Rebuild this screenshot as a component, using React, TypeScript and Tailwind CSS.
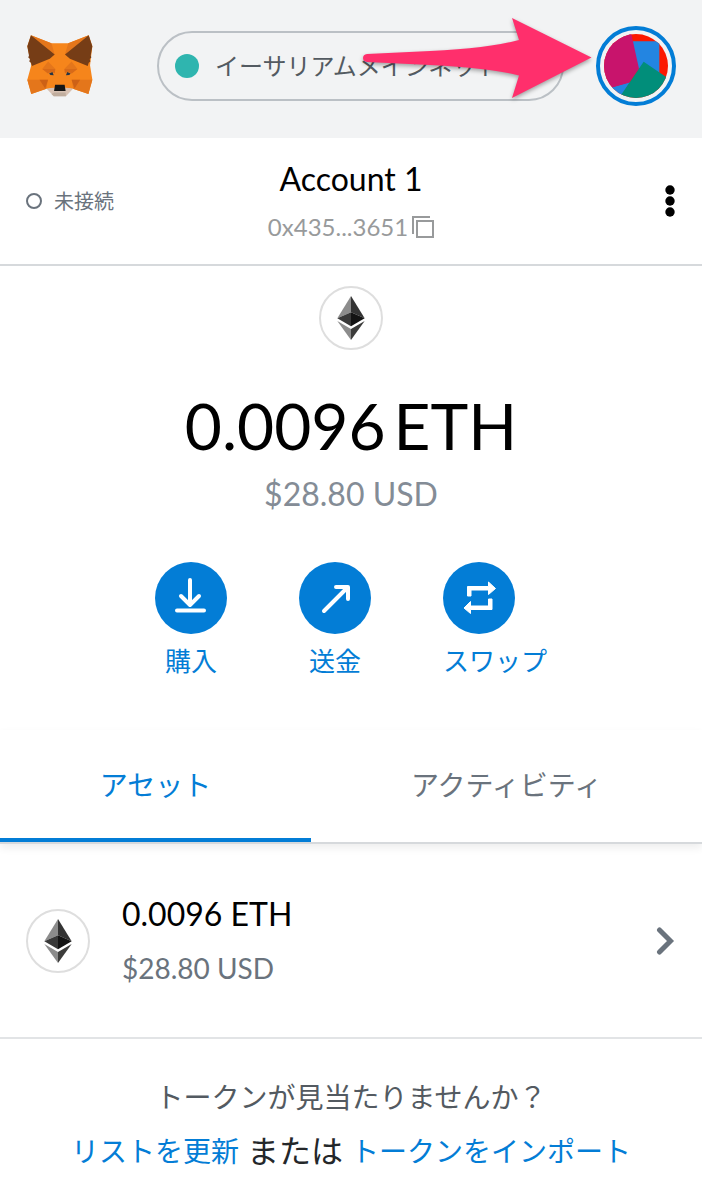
import React from "react";

const FONT = "font-['Lato','Noto_Sans_CJK_JP',sans-serif]";

function FoxLogo() {
  return (
    <svg viewBox="50 42 206 192" className="h-16 w-[68px]" role="img" aria-label="MetaMask">
      <polygon
        fill="#f6851b"
        points="65,45 127,69 178,69 240,45 251,78 244,136 251,180 239,223 192,207 112,207 66,223 54,180 66,136 54,78"
      />
      <polygon fill="#e4761b" points="65,45 127,69 137,103" />
      <polygon fill="#e4761b" points="240,45 178,69 168,103" />
      <polygon fill="#763d16" points="65,45 137,103 122,116 68,138 65,128 60,124 62,117 57,112 59,106 54,78" />
      <polygon fill="#763d16" points="240,45 168,103 183,116 237,138 240,128 245,124 243,117 248,112 246,106 251,78" />
      <polygon fill="#e4761b" points="54,180 116,180 112,207 66,223" />
      <polygon fill="#e4761b" points="251,180 189,180 193,207 239,223" />
      <polygon fill="#cd6116" points="91,180 117,180 108,206" />
      <polygon fill="#cd6116" points="214,180 188,180 197,206" />
      <polygon fill="#e4761b" points="117,124 139,147 99,147" />
      <polygon fill="#e4761b" points="188,124 166,147 206,147" />
      <polygon fill="#d86a18" points="99,147 139,147 137,160 128,156 116,161" />
      <polygon fill="#d86a18" points="206,147 166,147 168,160 177,156 189,161" />
      <polygon fill="#233447" points="120,161 130,156 134,166 124,165" />
      <polygon fill="#233447" points="185,161 175,156 171,166 181,165" />
      <polygon fill="#d7c1b3" points="112,206 136,203 169,203 193,206 171,230 134,230" />
      <polygon fill="#c0ad9e" points="135,218 170,218 171,230 134,230 127,223" />
      <polygon fill="#f6851b" points="112,206 139,190 166,190 193,206 169,202 136,202" />
      <polygon fill="#161616" points="138,195 167,195 170,214 135,214" />
    </svg>
  );
}

function AccountAvatar() {
  return (
    <svg viewBox="552 102 192 192" className="size-16 rounded-full" aria-hidden="true">
      <rect x="552" y="102" width="192" height="192" fill="#fb1800" />
      <polygon fill="#2385e1" points="636,124 718,124 718,222 671,190 655,210" />
      <polygon fill="#2385e1" points="560,266 630,246 600,294" />
      <polygon fill="#c8146c" points="552,102 634,102 657,206 627,248 578,262 552,268" />
      <polygon fill="#018e7a" points="671,185 744,235 744,294 597,294" />
    </svg>
  );
}

function EthIcon() {
  return (
    <span className="flex size-16 shrink-0 items-center justify-center rounded-full border-2 border-[#dedede] bg-white">
      <svg viewBox="0 0 82 132" className="h-11 w-7" aria-hidden="true">
        <polygon fill="#8c8c8c" points="41,0 41,49 0,67" />
        <polygon fill="#343434" points="41,0 82,67 41,49" />
        <polygon fill="#393939" points="41,49 41,91 0,67" />
        <polygon fill="#141414" points="41,49 82,67 41,91" />
        <polygon fill="#8c8c8c" points="0,75 41,99 41,132" />
        <polygon fill="#3c3c3b" points="82,75 41,99 41,132" />
      </svg>
    </span>
  );
}

function PointerArrow() {
  return (
    <svg
      viewBox="355 10 245 98"
      className="pointer-events-none absolute top-[10px] right-[102px] h-[98px] w-[245px] drop-shadow-[0_2px_2px_rgba(0,0,0,0.35)]"
      aria-hidden="true"
    >
      <path
        fill="#ff2f6c"
        d="M367 54 L430 51 Q490 48 519 40 L512 18 L591.500 57.500 L512 98 L519 75.500 Q490 68 430 65 L367 62 Q363 61.500 363 58 Q363 54.500 367 54 Z"
      />
    </svg>
  );
}

function DownloadIcon() {
  return (
    <svg viewBox="0 0 72 72" className="size-[72px]" fill="none" stroke="#fff" strokeWidth="4" strokeLinecap="round" strokeLinejoin="round" aria-hidden="true">
      <path d="M35 18V42M26 34L35 43L44 34M22 48.500H49" />
    </svg>
  );
}

function SendIcon() {
  return (
    <svg viewBox="0 0 72 72" className="size-[72px]" fill="none" stroke="#fff" strokeWidth="4" strokeLinecap="round" strokeLinejoin="round" aria-hidden="true">
      <path d="M25 49L48 26M37 25H49V37" />
    </svg>
  );
}

function SwapIcon() {
  return (
    <svg viewBox="0 0 72 72" className="size-[72px]" aria-hidden="true">
      <path
        fill="#fff"
        stroke="#fff"
        strokeWidth="1"
        strokeLinejoin="round"
        d="M24.500 34V24.500H45.500V20L52.500 26.500L45.500 32.500V28H28V34Z M49 37V47.500H27.500V51.500L21 46L27.500 39.500V44H45.500V37Z"
      />
    </svg>
  );
}

function ActionButton({ label, children }: { label: string; children: React.ReactNode }) {
  return (
    <button type="button" className="min-w-[72px] text-[26px] leading-[38px] text-[#037dd6]">
      <span className="block size-[72px] rounded-full bg-[#037dd6]">{children}</span>
      <span className="mt-2 block text-center">{label}</span>
    </button>
  );
}

export default function App() {
  return (
    <div className={`${FONT} bg-white text-black`}>
      <header className="relative flex h-[138px] items-center bg-[#f2f3f4] px-[26px] pb-[6px]">
        <FoxLogo />
        <button
          type="button"
          className="mr-8 ml-[63px] flex h-[70px] min-w-0 flex-1 items-center gap-4 rounded-full border-2 border-[#bbc0c5] px-4 text-[24px] text-[#535a61]"
        >
          <span className="size-6 shrink-0 rounded-full bg-[#2fb5af]" />
          <span className="truncate">イーサリアムメインネット</span>
        </button>
        <button
          type="button"
          aria-label="Account menu"
          className="flex size-20 shrink-0 items-center justify-center rounded-full border-4 border-[#037dd6]"
        >
          <AccountAvatar />
        </button>
        <PointerArrow />
      </header>

      <section className="grid grid-cols-[1fr_auto_1fr] items-center border-b-2 border-[#d6d9dc] px-[26px] pt-[23px] pb-[23px]">
        <div className="flex items-center gap-3 text-[20px] leading-7 text-[#6a737d]">
          <span className="size-4 rounded-full border-2 border-[#6a737d]" />
          <span>未接続</span>
        </div>
        <div className="flex flex-col items-center gap-4">
          <h1 className="text-[32px] leading-9">Account 1</h1>
          <button type="button" className="flex items-center gap-1 text-[24px] leading-7 text-[#989a9b]">
            0x435...3651
            <svg viewBox="0 0 22 22" className="size-[22px]" fill="none" stroke="#989a9b" strokeWidth="2" aria-hidden="true">
              <path d="M1 18V1H18" />
              <rect x="5" y="5" width="16" height="16" />
            </svg>
          </button>
        </div>
        <button type="button" aria-label="Account options" className="justify-self-end">
          <svg viewBox="0 0 12 32" className="h-8 w-3" aria-hidden="true">
            <circle cx="6" cy="5" r="4.700" />
            <circle cx="6" cy="16" r="4.700" />
            <circle cx="6" cy="27" r="4.700" />
          </svg>
        </button>
      </section>

      <section className="flex flex-col items-center pt-5">
        <EthIcon />
        <p className="mt-11 flex gap-2 text-[64px] leading-[64px]">
          <span>0.0096</span>
          <span>ETH</span>
        </p>
        <p className="mt-4 text-[32px] leading-10 text-[#848c96]">$28.80 USD</p>
        <div className="mt-12 flex gap-[72px]">
          <ActionButton label="購入">
            <DownloadIcon />
          </ActionButton>
          <ActionButton label="送金">
            <SendIcon />
          </ActionButton>
          <ActionButton label="スワップ">
            <SwapIcon />
          </ActionButton>
        </div>
      </section>

      <div role="tablist" className="mt-[50px] flex border-b-2 border-[#d6d9dc] text-[28px] leading-10 shadow-[0_4px_8px_rgba(0,0,0,0.07)]">
        <button type="button" role="tab" aria-selected="true" className="flex-auto border-b-4 border-[#037dd6] pt-[35px] pb-[33px] text-[#037dd6]">
          アセット
        </button>
        <button type="button" role="tab" aria-selected="false" className="flex-auto border-b-4 border-transparent pt-[35px] pb-[33px] text-[#6a737d]">
          アクティビティ
        </button>
      </div>

      <button type="button" className="flex w-full items-center gap-8 border-b-2 border-[#e2e4e6] px-[26px] pt-[50px] pb-[49px] text-left">
        <EthIcon />
        <span className="flex-1">
          <span className="block text-[32px] leading-10">0.0096 ETH</span>
          <span className="mt-[14px] block text-[28px] leading-10 text-[#6a737d]">$28.80 USD</span>
        </span>
        <svg viewBox="0 0 20 28" className="h-7 w-5" fill="none" stroke="#6a737d" strokeWidth="5" strokeLinecap="round" strokeLinejoin="miter" aria-hidden="true">
          <path d="M3.500 3L14.500 14L3.500 25" />
        </svg>
      </button>

      <footer className="pt-[38px] pb-4 text-center">
        <p className="text-[28px] leading-10 text-[#535a61]">トークンが見当たりませんか？</p>
        <p className="mt-[14px] flex items-center justify-center gap-2 text-[28px] leading-10">
          <a href="#refresh" className="text-[#037dd6]">リストを更新</a>
          <span className="text-[32px] text-[#24272a]">または</span>
          <a href="#import" className="text-[#037dd6]">トークンをインポート</a>
        </p>
      </footer>
    </div>
  );
}
